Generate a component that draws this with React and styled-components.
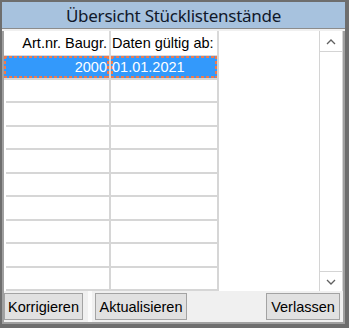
import React from 'react';
import styled, { createGlobalStyle } from 'styled-components';

const Global = createGlobalStyle`
  html, body { margin: 0; padding: 0; background: #ffffff; }
  body { font-family: "Liberation Sans", Arial, sans-serif; }
`;

const Window = styled.div`
  box-sizing: border-box;
  width: 349px;
  height: 328px;
  border-style: solid;
  border-color: #6e6e6e;
  border-width: 2px 4px 4px 2px;
  background: #f0f0f0;
  display: flex;
  flex-direction: column;
`;

const TitleBar = styled.div`
  height: 26px;
  flex: none;
  background: #a7c2de;
  border-bottom: 1px solid #8c8c8c;
  display: flex;
  align-items: center;
  justify-content: center;
  font-family: "Noto Sans", sans-serif;
  font-size: 17px;
  letter-spacing: -0.25px;
  color: #10182a;
`;

const Body = styled.div`
  margin-top: 2px;
  flex: 1;
  display: flex;
  flex-direction: column;
  border-style: solid;
  border-color: #a0a0a0;
  border-width: 0 2px 2px 2px;
`;

const GridPanel = styled.div`
  height: 260px;
  flex: none;
  display: flex;
  background: #ffffff;
`;

const Table = styled.div`
  flex: 1;
  display: flex;
  flex-direction: column;
`;

const Row = styled.div`
  display: flex;
  height: ${p => p.$h}px;
  flex: none;
  margin-left: ${p => (p.$empty ? 2 : 0)}px;
`;

const HeaderCell = styled.div`
  box-sizing: border-box;
  width: ${p => p.$w}px;
  border-right: 2px solid #d9d9d9;
  border-bottom: 1px solid #d9d9d9;
  display: flex;
  align-items: center;
  justify-content: ${p => (p.$right ? 'flex-end' : 'flex-start')};
  padding: 0 2px 0 1px;
  font-size: 14.5px;
  color: #000;
  white-space: nowrap;
`;

const dash = (dir) =>
  `repeating-linear-gradient(${dir}, #ee7a4e 0 3px, transparent 3px 5px)`;

const Cell = styled.div`
  box-sizing: border-box;
  width: ${p => p.$w}px;
  border-right: 2px solid #d6d6d6;
  border-bottom: 2px solid #d6d6d6;
  display: flex;
  align-items: center;
  justify-content: ${p => (p.$right ? 'flex-end' : 'flex-start')};
  padding: 0 2px 0 1px;
  font-size: 14.5px;
  white-space: nowrap;
  color: ${p => (p.$sel ? '#ffffff' : '#000000')};
  background: ${p =>
    p.$sel
      ? `${dash('90deg')} top / 100% 2px no-repeat,
         ${dash('90deg')} bottom / 100% 2px no-repeat,
         ${dash('180deg')} left / 2px 100% no-repeat,
         ${dash('180deg')} right / 2px 100% no-repeat,
         #3399fb`
      : '#ffffff'};
`;

const ScrollBar = styled.div`
  width: 24px;
  flex: none;
  box-sizing: border-box;
  border-left: 1px solid #d4d4d4;
  border-right: 1px solid #d4d4d4;
  display: flex;
  flex-direction: column;
  justify-content: space-between;
  background: #ffffff;
`;

const ArrowBox = styled.div`
  height: 20px;
  margin-top: ${p => (p.$down ? 0 : 1)}px;
  box-sizing: border-box;
  border-${p => (p.$down ? 'top' : 'bottom')}: 1px solid #d4d4d4;
  display: flex;
  align-items: center;
  justify-content: center;
  background: #ffffff;
`;

const ButtonBar = styled.div`
  flex: 1;
  display: flex;
  align-items: center;
  padding: 0 3px 0 0;
`;

const Button = styled.button`
  box-sizing: border-box;
  height: 27px;
  width: ${p => p.$w}px;
  margin-left: ${p => p.$ml}px;
  border: 1px solid #a3a3a3;
  background: #e1e1e1;
  font-family: "Liberation Sans", Arial, sans-serif;
  font-size: 14.5px;
  color: #000;
  padding: 0;
  white-space: nowrap;
`;

const Splitter = styled.div`
  align-self: stretch;
  width: 4px;
  margin-left: 5px;
  background: #fbfbfb;
`;

const Spacer = styled.div`
  flex: 1;
`;

const Chevron = ({ down }) => (
  <svg width="10" height="6" viewBox="0 0 10 6">
    <path
      d={down ? 'M1 1 L5 5 L9 1' : 'M1 5 L5 1 L9 5'}
      fill="none"
      stroke="#606060"
      strokeWidth="1.3"
    />
  </svg>
);

const ROW_H = [23.5, 23.5, 23.5, 23.5, 23.5, 23.5, 23.5, 23.5, 23.5, 23.5];

export default function App() {
  return (
    <>
      <Global />
      <Window>
        <TitleBar>Übersicht Stücklistenstände</TitleBar>
        <Body>
          <GridPanel>
            <Table>
              <Row $h={25}>
                <HeaderCell $w={107} $right>Art.nr. Baugr.</HeaderCell>
                <HeaderCell $w={108}>Daten gültig ab:</HeaderCell>
              </Row>
              {ROW_H.map((h, i) =>
                i === 0 ? (
                  <Row key={i} $h={h}>
                    <Cell $w={107} $right $sel>2000</Cell>
                    <Cell $w={108} $sel>01.01.2021</Cell>
                  </Row>
                ) : (
                  <Row key={i} $h={h} $empty>
                    <Cell $w={105} />
                    <Cell $w={108} />
                  </Row>
                )
              )}
            </Table>
            <ScrollBar>
              <ArrowBox><Chevron /></ArrowBox>
              <ArrowBox $down><Chevron down /></ArrowBox>
            </ScrollBar>
          </GridPanel>
          <ButtonBar>
            <Button $w={79} $ml={0}>Korrigieren</Button>
            <Splitter />
            <Button $w={92} $ml={3}>Aktualisieren</Button>
            <Spacer />
            <Button $w={74} $ml={0}>Verlassen</Button>
          </ButtonBar>
        </Body>
      </Window>
    </>
  );
}
